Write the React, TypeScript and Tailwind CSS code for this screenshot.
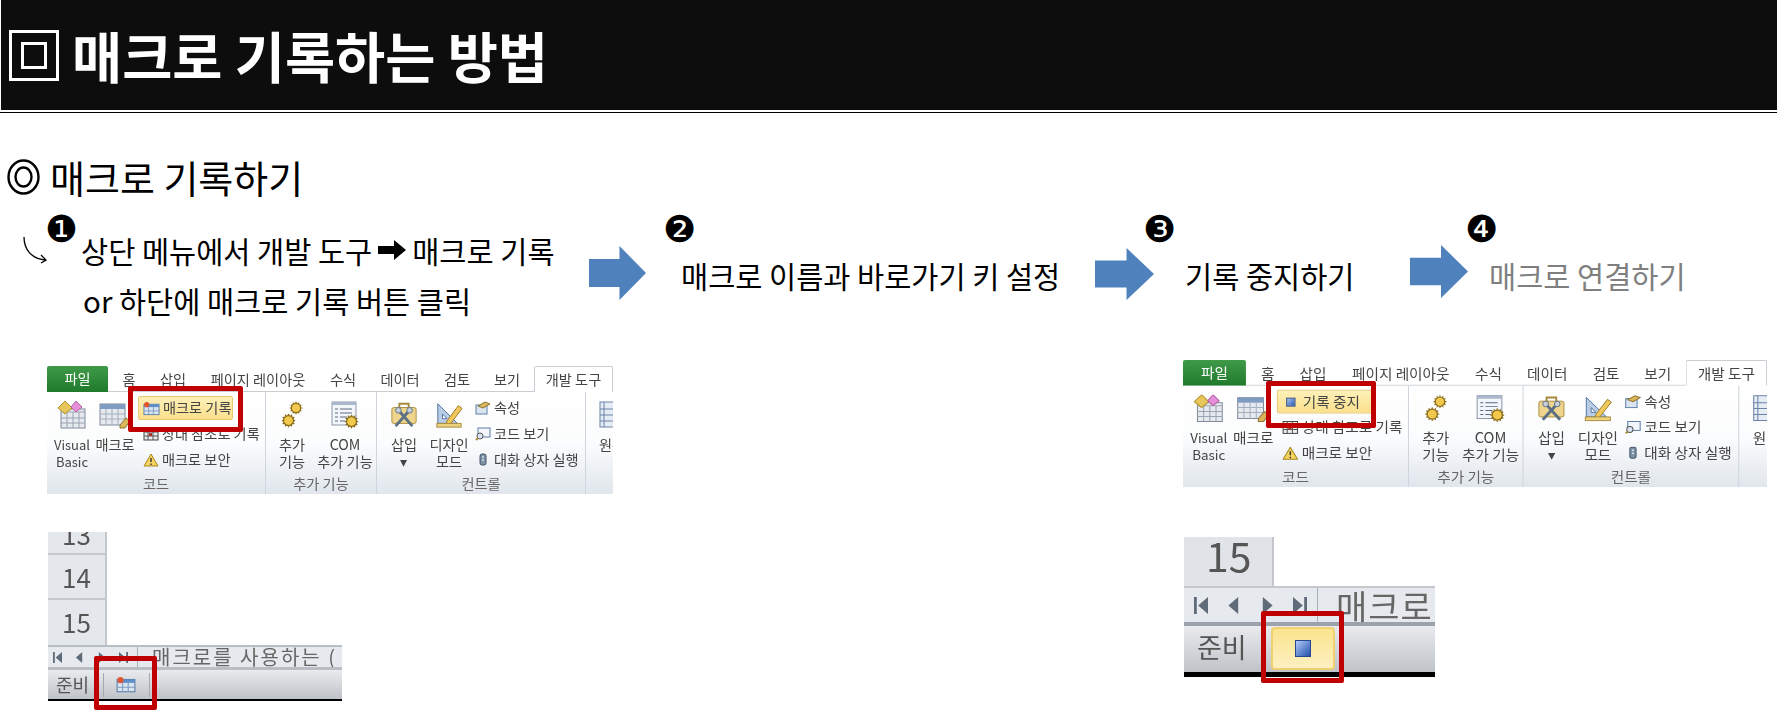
import { Cog } from "lucide-react";

const TABS = [
  { label: "홈", w: "w-[42px]" },
  { label: "삽입", w: "w-[46px]" },
  { label: "페이지 레이아웃", w: "w-[124px]" },
  { label: "수식", w: "w-[46px]" },
  { label: "데이터", w: "w-[68px]" },
  { label: "검토", w: "w-[46px]" },
  { label: "보기", w: "w-[54px]" },
];

function BlockArrow({ className }: { className: string }) {
  return (
    <svg viewBox="0 0 58 54" preserveAspectRatio="none" className={className}>
      <path d="M0 13H31V0L58 27L31 54V41H0Z" fill="#4f81bd" />
    </svg>
  );
}

function Marker({ n, className }: { n: string; className: string }) {
  return (
    <span className={`absolute font-['DejaVu_Sans',sans-serif] text-[37px] leading-[34px] text-black ${className}`}>
      {n}
    </span>
  );
}

function VisualBasicIcon() {
  return (
    <svg viewBox="0 0 32 28" className="h-[28px] w-[32px]">
      <rect x="5" y="8" width="24" height="19" fill="#e6e9ee" stroke="#7f8a99" />
      <path d="M5 11H29M11 11V27M17 11V27M23 11V27M5 17H29M5 22H29" stroke="#9aa5b4" />
      <path d="M9 0L16 7L9 13L2 7Z" fill="#e8c75a" stroke="#b3922e" />
      <path d="M20 0L26 6L20 11L15 6Z" fill="#e58fd8" stroke="#b55fa8" />
    </svg>
  );
}

function MacroIcon() {
  return (
    <svg viewBox="0 0 32 28" className="h-[28px] w-[32px]">
      <rect x="1" y="3" width="25" height="21" fill="#e6e9ee" stroke="#7f8a99" />
      <rect x="1" y="3" width="25" height="5" fill="#7f9cc2" />
      <path d="M7 8V24M13 8V24M19 8V24M1 13H26M1 18H26" stroke="#a3afbf" />
      <path d="M21 24L27 17L31 20L26 27H21Z" fill="#d9b75a" stroke="#8f7430" />
    </svg>
  );
}

function RecordIcon({ className }: { className: string }) {
  return (
    <svg viewBox="0 0 18 15" className={className}>
      <rect x="1" y="3" width="16" height="11" fill="#dbe5f1" stroke="#5d7fa8" />
      <rect x="1" y="3" width="16" height="3" fill="#5c8fcb" />
      <path d="M6 6V14M11 6V14M1 10H17" stroke="#7f9cc2" />
      <circle cx="4" cy="3.5" r="2.8" fill="#e2552f" />
    </svg>
  );
}

function StopIcon() {
  return (
    <span className="block h-[9px] w-[9px] border border-[#25478f] bg-gradient-to-br from-[#a9c4f2] to-[#2c58b5]" />
  );
}

function RelativeIcon() {
  return (
    <svg viewBox="0 0 16 14" className="h-[14px] w-[16px]">
      <rect x="1" y="1" width="14" height="12" fill="#eee" stroke="#444" />
      <path d="M5 1V13M10 1V13M1 5H15M1 9H15" stroke="#555" />
      <rect x="6" y="6" width="3" height="3" fill="#b03030" />
    </svg>
  );
}

function WarningIcon() {
  return (
    <svg viewBox="0 0 16 14" className="h-[14px] w-[16px]">
      <path d="M8 1L15 13H1Z" fill="#f4d35e" stroke="#a9881f" strokeLinejoin="round" />
      <path d="M8 5V9M8 10.5V12" stroke="#333" strokeWidth="1.4" />
    </svg>
  );
}

function GearsIcon() {
  return (
    <span className="relative block h-[28px] w-[22px]">
      <Cog className="absolute right-0 top-0 h-[14px] w-[14px] fill-[#f2c94c] text-[#8a6d1a]" strokeWidth={2} />
      <Cog className="absolute bottom-[1px] left-0 h-[15px] w-[15px] fill-[#f2c94c] text-[#8a6d1a]" strokeWidth={2} />
    </span>
  );
}

function ComIcon() {
  return (
    <span className="relative block h-[28px] w-[28px]">
      <svg viewBox="0 0 26 25" className="h-[25px] w-[26px]">
        <rect x="1" y="1" width="24" height="23" fill="#f3f6fa" stroke="#8a97a8" />
        <rect x="1" y="1" width="24" height="3" fill="#a9b8cc" />
        <path d="M4 8H7M9 8H21M4 12H7M9 12H21M4 16H7M9 16H16M4 20H7M9 20H14" stroke="#5b6b80" />
      </svg>
      <Cog className="absolute bottom-0 right-0 h-[15px] w-[15px] fill-[#f2c94c] text-[#8a6d1a]" strokeWidth={2} />
    </span>
  );
}

function ToolboxIcon() {
  return (
    <svg viewBox="0 0 30 28" className="h-[28px] w-[28px]">
      <path d="M10 6V2H20V6" fill="none" stroke="#a98a3c" strokeWidth="2" />
      <rect x="2" y="6" width="26" height="17" rx="2" fill="#eed48c" stroke="#a98a3c" />
      <path d="M6 26L20 10M24 26L10 10" stroke="#5b6f85" strokeWidth="3" />
      <circle cx="21" cy="9" r="3" fill="#c7d0da" stroke="#5b6f85" />
      <circle cx="9" cy="9" r="3" fill="#c7d0da" stroke="#5b6f85" />
    </svg>
  );
}

function DesignIcon() {
  return (
    <svg viewBox="0 0 30 28" className="h-[28px] w-[28px]">
      <path d="M3 2V23H24Z" fill="#b9cde6" stroke="#4d6f9c" />
      <path d="M8 13V18H13Z" fill="#fff" stroke="#4d6f9c" />
      <path d="M13 20L25 4L29 7L17 23L12 25Z" fill="#f0c75a" stroke="#9a7a25" />
      <rect x="2" y="23" width="26" height="4" fill="#ecd27c" stroke="#a98a3c" />
    </svg>
  );
}

function PropertyIcon() {
  return (
    <svg viewBox="0 0 16 14" className="h-[14px] w-[16px]">
      <rect x="1" y="4" width="11" height="9" fill="#dbe5f1" stroke="#5d7fa8" />
      <path d="M3 5L10 1L15 3L8 7Z" fill="#d9b75a" stroke="#8f7430" />
    </svg>
  );
}

function ViewCodeIcon() {
  return (
    <svg viewBox="0 0 16 14" className="h-[14px] w-[16px]">
      <rect x="3" y="1" width="12" height="9" fill="#f3f6fa" stroke="#5d7fa8" />
      <circle cx="5" cy="9" r="3" fill="#dbe5f1" stroke="#555" />
      <path d="M3 11L1 13" stroke="#a98a3c" strokeWidth="2" />
    </svg>
  );
}

function DialogIcon() {
  return (
    <svg viewBox="0 0 10 14" className="h-[14px] w-[10px]">
      <rect x="2" y="1" width="6" height="11" rx="2" fill="#7d93a5" stroke="#44566a" />
      <path d="M4 4H6M4 7H6" stroke="#fff" />
    </svg>
  );
}

function RowsIcon() {
  return (
    <svg viewBox="0 0 18 28" className="h-[28px] w-[18px]">
      <rect x="1" y="1" width="24" height="25" fill="#e6ecf4" stroke="#6a83a6" />
      <path d="M5 1V26M1 8H25M1 14H25M1 20H25" stroke="#6a83a6" />
    </svg>
  );
}

function BigButton({
  icon,
  lines,
  w,
  latin,
}: {
  icon: React.ReactNode;
  lines: string[];
  w: string;
  latin?: boolean;
}) {
  return (
    <div className={`flex shrink-0 flex-col items-center ${w}`}>
      <div className="flex h-[28px] items-center justify-center">{icon}</div>
      <div className={`mt-[7px] whitespace-nowrap text-center leading-[17px] ${latin ? "text-[13px]" : ""}`}>
        {lines.map((line) => (
          <div key={line}>{line}</div>
        ))}
      </div>
    </div>
  );
}

function SmallButton({ icon, label, active }: { icon: React.ReactNode; label: string; active?: boolean }) {
  return (
    <div
      className={`flex h-[24px] items-center gap-[3px] whitespace-nowrap rounded-[2px] pl-[4px] ${
        active ? "w-[95px] border border-[#e8c873] bg-gradient-to-b from-[#fdf0b8] to-[#fbe08c]" : ""
      }`}
    >
      <span className="flex w-[17px] justify-center">{icon}</span>
      <span>{label}</span>
    </div>
  );
}

function Group({ label, w, children }: { label: string; w: string; children: React.ReactNode }) {
  return (
    <div className={`flex shrink-0 flex-col border-r border-[#cfd5dc] ${w}`}>
      <div className="flex flex-1 items-start">{children}</div>
      <div className="h-[24px] text-center leading-[22px] text-[#666]">{label}</div>
    </div>
  );
}

function Ribbon({ stop }: { stop?: boolean }) {
  return (
    <div className="flex h-[128px] w-[566px] flex-col overflow-hidden text-[14.2px] text-[#444] blur-[0.4px]">
      <div className="flex h-[27px] items-end">
        <div className="flex h-full w-[61px] shrink-0 items-center justify-center rounded-t-[2px] bg-gradient-to-b from-[#3f9a48] to-[#1f7a2c] text-white">
          파일
        </div>
        <div className="flex h-[24px] flex-1 items-center border-b border-[#c9ced4] whitespace-nowrap">
          {TABS.map((tab) => (
            <span key={tab.label} className={`shrink-0 text-center ${tab.w}`}>
              {tab.label}
            </span>
          ))}
        </div>
        <div className="flex h-[26px] w-[79px] shrink-0 items-center justify-center whitespace-nowrap rounded-t-[2px] border border-b-0 border-[#c9ced4] bg-white">
          개발 도구
        </div>
      </div>
      <div className="flex flex-1 bg-gradient-to-b from-white via-[#fbfcfd] to-[#dfe5ec]">
        <Group label="코드" w="w-[219px]">
          <div className="mt-[9px] flex">
            <BigButton latin icon={<VisualBasicIcon />} lines={["Visual", "Basic"]} w="w-[50px]" />
            <BigButton icon={<MacroIcon />} lines={["매크로"]} w="w-[36px]" />
          </div>
          <div className="ml-[5px] mt-[4px] flex flex-col gap-[2px]">
            <SmallButton
              active
              icon={stop ? <StopIcon /> : <RecordIcon className="h-[15px] w-[18px]" />}
              label={stop ? "기록 중지" : "매크로 기록"}
            />
            <SmallButton icon={<RelativeIcon />} label="상대 참조로 기록" />
            <SmallButton icon={<WarningIcon />} label="매크로 보안" />
          </div>
        </Group>
        <Group label="추가 기능" w="w-[111px]">
          <div className="mt-[9px] flex">
            <BigButton icon={<GearsIcon />} lines={["추가", "기능"]} w="w-[52px]" />
            <BigButton icon={<ComIcon />} lines={["COM", "추가 기능"]} w="w-[54px]" />
          </div>
        </Group>
        <Group label="컨트롤" w="w-[209px]">
          <div className="mt-[9px] flex">
            <BigButton icon={<ToolboxIcon />} lines={["삽입", "▾"]} w="w-[54px]" />
            <BigButton icon={<DesignIcon />} lines={["디자인", "모드"]} w="w-[36px]" />
          </div>
          <div className="ml-[3px] mt-[4px] flex flex-col gap-[2px]">
            <SmallButton icon={<PropertyIcon />} label="속성" />
            <SmallButton icon={<ViewCodeIcon />} label="코드 보기" />
            <SmallButton icon={<DialogIcon />} label="대화 상자 실행" />
          </div>
        </Group>
        <div className="mt-[9px] w-[27px] overflow-hidden pl-[13px]">
          <RowsIcon />
          <div className="mt-[7px] whitespace-nowrap leading-[17px]">원본</div>
        </div>
      </div>
      {!stop && <div className="h-[2px] bg-[#b4b8bd]" />}
    </div>
  );
}

function NavArrows({ gap, size }: { gap: string; size: string }) {
  return (
    <div className={`flex items-center ${gap}`}>
      <svg viewBox="0 0 10 12" className={size}>
        <path d="M0 0H2V12H0ZM10 0V12L3 6Z" fill="#5f6b78" />
      </svg>
      <svg viewBox="0 0 10 12" className={size}>
        <path d="M8 0V12L1 6Z" fill="#5f6b78" />
      </svg>
      <svg viewBox="0 0 10 12" className={size}>
        <path d="M2 0V12L9 6Z" fill="#5f6b78" />
      </svg>
      <svg viewBox="0 0 10 12" className={size}>
        <path d="M10 0H8V12H10ZM0 0V12L7 6Z" fill="#5f6b78" />
      </svg>
    </div>
  );
}

function RedBox({ className }: { className: string }) {
  return <div className={`absolute rounded-[2px] border-[5px] border-[#c00000] ${className}`} />;
}

function SheetBarSmall() {
  return (
    <div className="relative w-[294px] text-[#555]">
      <div className="flex h-[113px] flex-col blur-[0.4px]">
        <div className="h-[23px] w-[59px] overflow-hidden border-b-2 border-r-2 border-[#c4c8cd] bg-[#e4e7ec]">
          <div className="-mt-[19px] text-center text-[26px] leading-[42px]">13</div>
        </div>
        <div className="h-[45px] w-[59px] border-b-2 border-r-2 border-[#c4c8cd] bg-[#e4e7ec] text-center text-[26px] leading-[43px]">
          14
        </div>
        <div className="h-[45px] w-[59px] border-r-2 border-[#c4c8cd] bg-[#e4e7ec] text-center text-[26px] leading-[43px]">
          15
        </div>
      </div>
      <div className="flex h-[25px] items-center overflow-hidden border-y-2 border-b-[3px] border-y-[#b9bec5] bg-[#e6e9ed] pl-[5px] blur-[0.4px]">
        <NavArrows gap="gap-[13px]" size="h-[11px] w-[9px]" />
        <span className="ml-[9px] h-full w-px bg-[#aab0b8]" />
        <span className="ml-[14px] whitespace-nowrap text-[20px] tracking-[2px] text-[#666]">매크로를 사용하는 (</span>
      </div>
      <div className="flex h-[31px] items-center border-b-2 border-black bg-gradient-to-b from-[#e9ebee] to-[#bfc3c8] blur-[0.4px]">
        <span className="ml-[8px] w-[47px] text-[18px]">준비</span>
        <span className="h-[24px] w-px bg-[#a5a9ae]" />
        <span className="ml-[12px] w-[33px]">
          <RecordIcon className="h-[17px] w-[20px]" />
        </span>
        <span className="h-[24px] w-px bg-[#a5a9ae]" />
      </div>
      <RedBox className="left-[46px] top-[124px] h-[54px] w-[63px]" />
    </div>
  );
}

function SheetBarLarge() {
  return (
    <div className="relative ml-px w-[251px] text-[#555]">
      <div className="h-[49px] w-[90px] border-r-2 border-[#c4c8cd] bg-[#e0e3e8] pl-[22px] text-[41px] leading-[34px] blur-[0.4px]">
        15
      </div>
      <div className="flex h-[40px] items-center overflow-hidden border-t-2 border-b-4 border-t-[#c4c8cd] border-b-[#9ca2ab] bg-[#e6e9ed] pl-[10px] blur-[0.4px]">
        <NavArrows gap="gap-[19px]" size="h-[17px] w-[14px]" />
        <span className="ml-[10px] h-full w-px bg-[#aab0b8]" />
        <span className="ml-[18px] whitespace-nowrap text-[34px] tracking-[1px] text-[#666]">매크로</span>
      </div>
      <div className="flex h-[51px] items-start border-b-[5px] border-black bg-gradient-to-b from-[#e9ebee] to-[#bfc3c8] blur-[0.4px]">
        <span className="ml-[13px] mt-[1px] w-[66px] whitespace-nowrap text-[27px]">준비</span>
        <span className="ml-[8px] mt-[1px] flex h-[43px] w-[64px] items-center justify-center rounded-[4px] border-2 border-[#f0d070] bg-gradient-to-b from-[#fbe48e] to-[#fdf0c0]">
          <span className="block h-[17px] w-[16px] border border-[#25478f] bg-gradient-to-br from-[#b5ccf5] to-[#2450ad]" />
        </span>
      </div>
      <RedBox className="left-[77px] top-[74px] h-[72px] w-[83px]" />
    </div>
  );
}

export default function App() {
  return (
    <div className="h-[719px] w-[1777px] overflow-hidden bg-white font-['Noto_Sans_CJK_KR','Liberation_Sans',sans-serif] text-black">
      <header className="border-b border-black pb-[2px]">
        <div className="ml-px flex h-[110px] items-center bg-[#0d0d0d] pl-[8px]">
          <div className="flex h-[51px] w-[50px] items-center justify-center border-[3px] border-white">
            <div className="h-[27px] w-[26px] border-[3px] border-white" />
          </div>
          <h1 className="ml-[13px] text-[54.5px] font-bold leading-none text-white">매크로 기록하는 방법</h1>
        </div>
      </header>

      <h2 className="mt-[44px] flex h-[40px] items-center pl-[7px] text-[38px] leading-[40px]">
        <svg viewBox="0 0 33 36" className="h-[36px] w-[33px]" fill="none" stroke="black" strokeWidth="2.4">
          <ellipse cx="16.5" cy="18" rx="15" ry="16.5" />
          <ellipse cx="16.5" cy="18" rx="8" ry="9.5" />
        </svg>
        <span className="ml-[10px]">매크로 기록하기</span>
      </h2>

      <section className="mt-[16px] flex h-[147px] items-start text-[29.5px] leading-[50px]">
        <div className="relative h-full w-[589px] pl-[81px] pt-[12px]">
          <Marker n="❶" className="left-[45px] top-0" />
          <svg viewBox="0 0 26 28" className="absolute left-[22px] top-[23px] h-[28px] w-[26px]" fill="none" stroke="black" strokeWidth="1.3">
            <path d="M2 1C2 13 9 23 24 24M19 19L24 24L19 27" />
          </svg>
          <div className="flex items-center whitespace-nowrap">
            상단 메뉴에서 개발 도구
            <svg viewBox="0 0 28 20" className="mx-[6px] h-[20px] w-[28px]">
              <path d="M0 6H16V0L28 10L16 20V14H0Z" fill="black" />
            </svg>
            매크로 기록
          </div>
          <div className="whitespace-nowrap pl-[2px]">or 하단에 매크로 기록 버튼 클릭</div>
        </div>
        <BlockArrow className="mt-[33px] h-[54px] w-[57px] shrink-0" />
        <div className="relative h-full w-[449px] shrink-0 whitespace-nowrap pl-[35px] pt-[37px]">
          <Marker n="❷" className="left-[17px] top-0" />
          매크로 이름과 바로가기 키 설정
        </div>
        <BlockArrow className="mt-[35px] h-[52px] w-[59px] shrink-0" />
        <div className="relative h-full w-[256px] shrink-0 whitespace-nowrap pl-[31px] pt-[37px]">
          <Marker n="❸" className="-left-[11px] top-0" />
          기록 중지하기
        </div>
        <BlockArrow className="mt-[32px] h-[53px] w-[58px] shrink-0" />
        <div className="relative h-full flex-1 whitespace-nowrap pl-[21px] pt-[37px] text-[#7f7f7f]">
          <Marker n="❹" className="-left-[3px] top-0" />
          매크로 연결하기
        </div>
      </section>

      <section className="flex items-start">
        <div className="ml-[47px] mt-[6px] w-[566px]">
          <div className="relative">
            <Ribbon />
            <RedBox className="left-[81px] top-[20px] h-[46px] w-[115px]" />
          </div>
          <div className="ml-px mt-[38px]">
            <SheetBarSmall />
          </div>
        </div>
        <div className="ml-[570px] w-[584px]">
          <div className="relative h-[127px]">
            <div className="origin-top-left [transform:scale(1.032,0.992)]">
              <Ribbon stop />
            </div>
            <RedBox className="left-[83px] top-[21px] h-[47px] w-[110px]" />
          </div>
          <div className="mt-[50px]">
            <SheetBarLarge />
          </div>
        </div>
      </section>
    </div>
  );
}
